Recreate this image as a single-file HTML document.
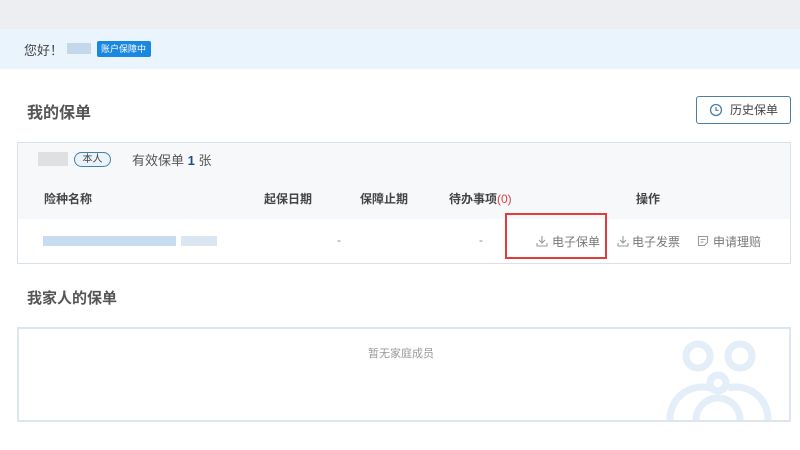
<!DOCTYPE html>
<html><head><meta charset="utf-8"><style>
*{margin:0;padding:0;box-sizing:border-box}
body{width:800px;height:450px;overflow:hidden;background:#fff;font-family:"Liberation Sans","Noto Sans CJK SC",sans-serif;position:relative;color:#333}
.a{position:absolute}
.op{font-size:12px;color:#777;top:233px}
</style></head><body>
<div class="a" style="left:0;top:0;width:800px;height:29px;background:#eceef1"></div>
<div class="a" style="left:0;top:29px;width:800px;height:40px;background:#eaf4fd"></div>
<div class="a" style="left:24px;top:40px;font-size:13px;color:#444">您好！</div>
<div class="a" style="left:67px;top:43px;width:24px;height:11px;background:#c5d7ea"></div>
<div class="a" style="left:97px;top:41px;width:54px;height:16px;background:#1a87e0;border-radius:2px;color:#fff;font-size:9px;line-height:16px;padding-left:4px">账户保障中</div>
<div class="a" style="left:27px;top:99px;font-size:16px;font-weight:bold;color:#555">我的保单</div>
<div class="a" style="left:696px;top:96px;width:95px;height:28px;border:1px solid #4a7fa6;border-radius:3px;font-size:12px;color:#444;line-height:26px;padding-left:33px">历史保单</div>
<svg class="a" style="left:709px;top:103px" width="14" height="14" viewBox="0 0 14 14"><circle cx="7" cy="7" r="5.5" fill="none" stroke="#4a7fa6" stroke-width="1.3"/><path d="M7 4v3.3h2.5" fill="none" stroke="#4a7fa6" stroke-width="1.2"/></svg>
<div class="a" style="left:17px;top:142px;width:774px;height:122px;border:1px solid #d8e2ea;background:#f6f8fa"></div>
<div class="a" style="left:18px;top:219px;width:772px;height:44px;background:#fff"></div>
<div class="a" style="left:38px;top:152px;width:30px;height:14px;background:#d6d6d6;opacity:.7"></div>
<div class="a" style="left:74px;top:152px;width:37px;height:15px;border:1px solid #4a7fa6;border-radius:8px;font-size:10px;line-height:13px;text-align:center;color:#444;background:#eaf2fa">本人</div>
<div class="a" style="left:132px;top:150px;font-size:13px;color:#555">有效保单 <b style="color:#1e4e8a">1</b> 张</div>
<div class="a" style="left:44px;top:190px;font-size:12px;font-weight:bold;color:#444">险种名称</div>
<div class="a" style="left:264px;top:190px;font-size:12px;font-weight:bold;color:#444">起保日期</div>
<div class="a" style="left:360px;top:190px;font-size:12px;font-weight:bold;color:#444">保障止期</div>
<div class="a" style="left:449px;top:190px;font-size:12px;font-weight:bold;color:#444">待办事项<span style="color:#e04040;font-weight:normal">(0)</span></div>
<div class="a" style="left:636px;top:190px;font-size:12px;font-weight:bold;color:#444">操作</div>
<div class="a" style="left:43px;top:236px;width:133px;height:10px;background:#c8dcef"></div>
<div class="a" style="left:181px;top:236px;width:36px;height:10px;background:#dae6f1"></div>
<div class="a" style="left:337px;top:233px;font-size:12px;color:#888">-</div>
<div class="a" style="left:479px;top:233px;font-size:12px;color:#888">-</div>
<div class="a" style="left:505px;top:213px;width:102px;height:46px;border:2px solid #e23c3c"></div>
<svg class="a" style="left:536px;top:235px" width="12" height="12" viewBox="0 0 12 12"><path d="M6 1v7M3 5l3 3 3-3M1 8v3h10V8" fill="none" stroke="#999" stroke-width="1.1"/></svg>
<div class="a op" style="left:552px">电子保单</div>
<svg class="a" style="left:617px;top:235px" width="12" height="12" viewBox="0 0 12 12"><path d="M6 1v7M3 5l3 3 3-3M1 8v3h10V8" fill="none" stroke="#999" stroke-width="1.1"/></svg>
<div class="a op" style="left:632px">电子发票</div>
<svg class="a" style="left:697px;top:235px" width="12" height="12" viewBox="0 0 12 12"><path d="M1.5 1.5h9v6l-3 3h-6zM3.5 4.5h5M3.5 7h3" fill="none" stroke="#999" stroke-width="1.1"/></svg>
<div class="a op" style="left:713px">申请理赔</div>
<div class="a" style="left:27px;top:287px;font-size:15px;font-weight:bold;color:#555">我家人的保单</div>
<div class="a" style="left:17px;top:327px;width:774px;height:95px;border:2px solid #dde6ee;background:#fff"></div>
<div class="a" style="left:368px;top:345px;font-size:11px;color:#999">暂无家庭成员</div>
<svg class="a" style="left:660px;top:330px" width="130" height="90" viewBox="0 0 130 90"><g fill="none" stroke="#e3eef8" stroke-width="7"><circle cx="38" cy="26" r="12"/><circle cx="80" cy="26" r="12"/><circle cx="58" cy="53" r="8"/><path d="M10 90a32 32 0 0 1 40-32M108 90a32 32 0 0 0-40-32M36 90a22 22 0 0 1 44 0"/></g></svg>
</body></html>
